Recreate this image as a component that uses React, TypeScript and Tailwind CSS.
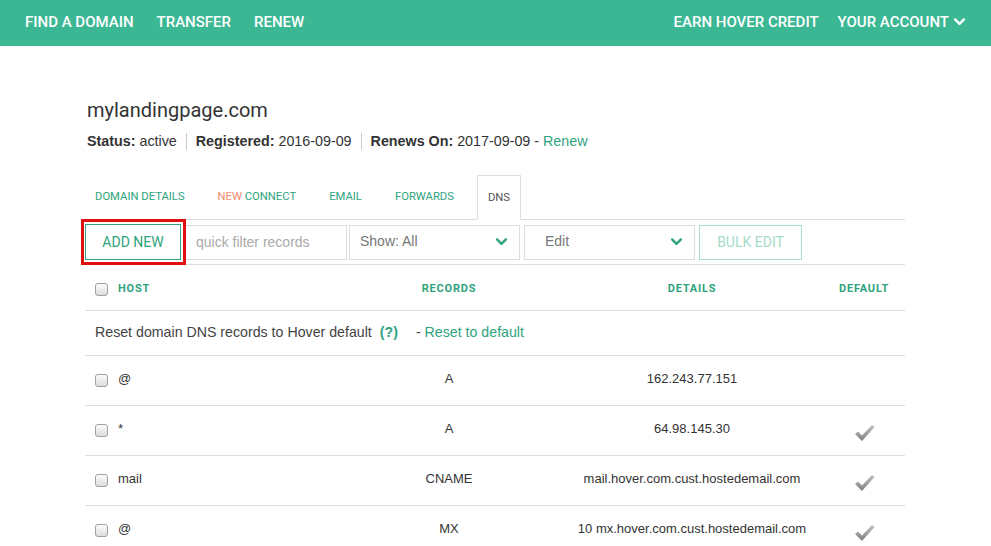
import React from "react";

const Chevron = ({ color = "#2ea37e", size = 11 }: { color?: string; size?: number }) => (
  <svg width={size} height={Math.round(size * 0.7)} viewBox="0 0 10 7">
    <path d="M1 1.2 L5 5.2 L9 1.2" fill="none" stroke={color} strokeWidth="2.2" strokeLinecap="round" strokeLinejoin="round" />
  </svg>
);

const Checkbox = () => (
  <div className="w-[13px] h-[13px] rounded-[3px] border border-[#a0a0a0] bg-gradient-to-b from-[#fdfdfd] to-[#dcdcdc] shrink-0" />
);

const Check = () => (
  <svg width="21" height="18" viewBox="0 0 21 18">
    <defs>
      <linearGradient id="cg" x1="0" y1="0" x2="0" y2="1">
        <stop offset="0" stopColor="#c0c0c0" />
        <stop offset="1" stopColor="#808080" />
      </linearGradient>
    </defs>
    <path d="M1 10 L4 7.5 L8 11.5 L18 1 L20.5 3 L8 17 Z" fill="url(#cg)" />
  </svg>
);

const rows = [
  { host: "@", rec: "A", det: "162.243.77.151", def: false },
  { host: "*", rec: "A", det: "64.98.145.30", def: true },
  { host: "mail", rec: "CNAME", det: "mail.hover.com.cust.hostedemail.com", def: true },
  { host: "@", rec: "MX", det: "10 mx.hover.com.cust.hostedemail.com", def: true },
];

export default function App() {
  const arial = { fontFamily: '"Liberation Sans", Arial, sans-serif' };
  const din = { fontFamily: 'Roboto, "Liberation Sans", sans-serif' };
  return (
    <div className="w-[991px] h-[546px] overflow-hidden bg-white" style={arial}>
      {/* Top nav */}
      <div className="h-[46px] bg-[#3bb794] flex items-center justify-between pl-[25px] pr-[26px] pb-[2px] text-white text-[15px] font-medium" style={din}>
        <div className="flex items-center gap-[23px]">
          <span>FIND A DOMAIN</span>
          <span>TRANSFER</span>
          <span>RENEW</span>
        </div>
        <div className="flex items-center gap-[19px]">
          <span>EARN HOVER CREDIT</span>
          <span className="flex items-center gap-[5px]">
            YOUR ACCOUNT
            <Chevron color="#ffffff" size={11} />
          </span>
        </div>
      </div>

      <div className="ml-[85px] w-[820px]">
        <div className="mt-[50px] pl-[2px] text-[20px] leading-[28px] text-[#333]" style={din}>
          mylandingpage.com
        </div>
        <div className="mt-[7px] pl-[2px] flex items-center text-[14.3px] leading-[20px] text-[#333]">
          <span>
            <b>Status:</b> active
          </span>
          <span className="mx-[9px] w-px h-[17px] bg-[#ccc]" />
          <span>
            <b>Registered:</b> 2016-09-09
          </span>
          <span className="mx-[9px] w-px h-[17px] bg-[#ccc]" />
          <span>
            <b>Renews On:</b> 2017-09-09 - <span className="text-[#2ea37e]">Renew</span>
          </span>
        </div>

        {/* Tabs */}
        <div className="mt-[24px] flex items-end gap-[13px] border-b border-[#ddd] h-[45px] text-[11.25px] text-[#2ea37e]" style={din}>
          <div className="h-[44px] flex items-center pt-[1px] px-[10px]">DOMAIN DETAILS</div>
          <div className="h-[44px] flex items-center pt-[1px] px-[10px]">
            <span className="text-[#f08c6c]">NEW</span>&nbsp;CONNECT
          </div>
          <div className="h-[44px] flex items-center pt-[1px] px-[10px]">EMAIL</div>
          <div className="h-[44px] flex items-center pt-[1px] px-[10px]">FORWARDS</div>
          <div className="h-[45px] -mb-px flex items-center pt-[1px] px-[10px] border border-[#ddd] border-b-white bg-white text-[#555]">DNS</div>
        </div>

        {/* Toolbar */}
        <div className="flex items-center h-[45px] border-b border-[#ddd]">
          <div className="relative">
            <div className="w-[96px] h-[36px] border border-[#2ea37e] flex items-center justify-center text-[14px] text-[#2ea37e]" style={din}>
              ADD NEW
            </div>
            <div className="absolute left-[-4px] top-[-5px] w-[105px] h-[46px] border-[3px] border-[#e01010] pointer-events-none" />
          </div>
          <div className="ml-[4px] w-[162px] h-[35px] border border-[#ddd] flex items-center pl-[10px] text-[14px] text-[#aaa]">
            quick filter records
          </div>
          <div className="ml-[2px] w-[171px] h-[35px] border border-[#ddd] flex items-center justify-between pl-[10px] pr-[12px] text-[14px] text-[#777]">
            <span className="-mt-[2px]">Show: All</span>
            <Chevron size={11} />
          </div>
          <div className="ml-[4px] w-[171px] h-[35px] border border-[#ddd] flex items-center justify-between pl-[20px] pr-[12px] text-[14px] text-[#777]">
            <span className="-mt-[2px]">Edit</span>
            <Chevron size={11} />
          </div>
          <div className="ml-[4px] w-[103px] h-[35px] border border-[#a8e0cc] flex items-center justify-center text-[14px] text-[#a6dcc8]" style={din}>
            BULK EDIT
          </div>
        </div>

        {/* Header row */}
        <div className="flex items-center h-[46px] pt-[4px] border-b border-[#ddd] text-[11px] font-bold tracking-[0.8px] text-[#2ea37e]" style={din}>
          <div className="w-[282px] flex items-center pl-[10px] gap-[10px]">
            <Checkbox />
            <span>HOST</span>
          </div>
          <div className="w-[164px] text-center">RECORDS</div>
          <div className="w-[292px] pl-[30px] text-center">DETAILS</div>
          <div className="w-[82px] text-center">DEFAULT</div>
        </div>

        {/* Reset row */}
        <div className="flex items-center h-[45px] border-b border-[#ddd] pl-[10px] text-[14.2px] text-[#444]">
          <span>Reset domain DNS records to Hover default</span>
          <span className="ml-[8px] font-bold text-[#2ea37e]">(?)</span>
          <span className="ml-[18px]">-&nbsp;</span>
          <span className="text-[#2ea37e]">Reset to default</span>
        </div>

        {rows.map((r, i) => (
          <div key={i} className="flex h-[50px] border-b border-[#ddd] text-[13px] text-[#333]">
            <div className="w-[282px] flex items-center pl-[10px] gap-[10px] pb-[4px]">
              <div className="mt-[4px]">
                <Checkbox />
              </div>
              <span>{r.host}</span>
            </div>
            <div className="w-[164px] text-center pt-[13px]">{r.rec}</div>
            <div className="w-[292px] pl-[30px] text-center pt-[13px]">{r.det}</div>
            <div className="w-[82px] flex justify-center pt-[18px]">{r.def ? <Check /> : null}</div>
          </div>
        ))}
      </div>
    </div>
  );
}
